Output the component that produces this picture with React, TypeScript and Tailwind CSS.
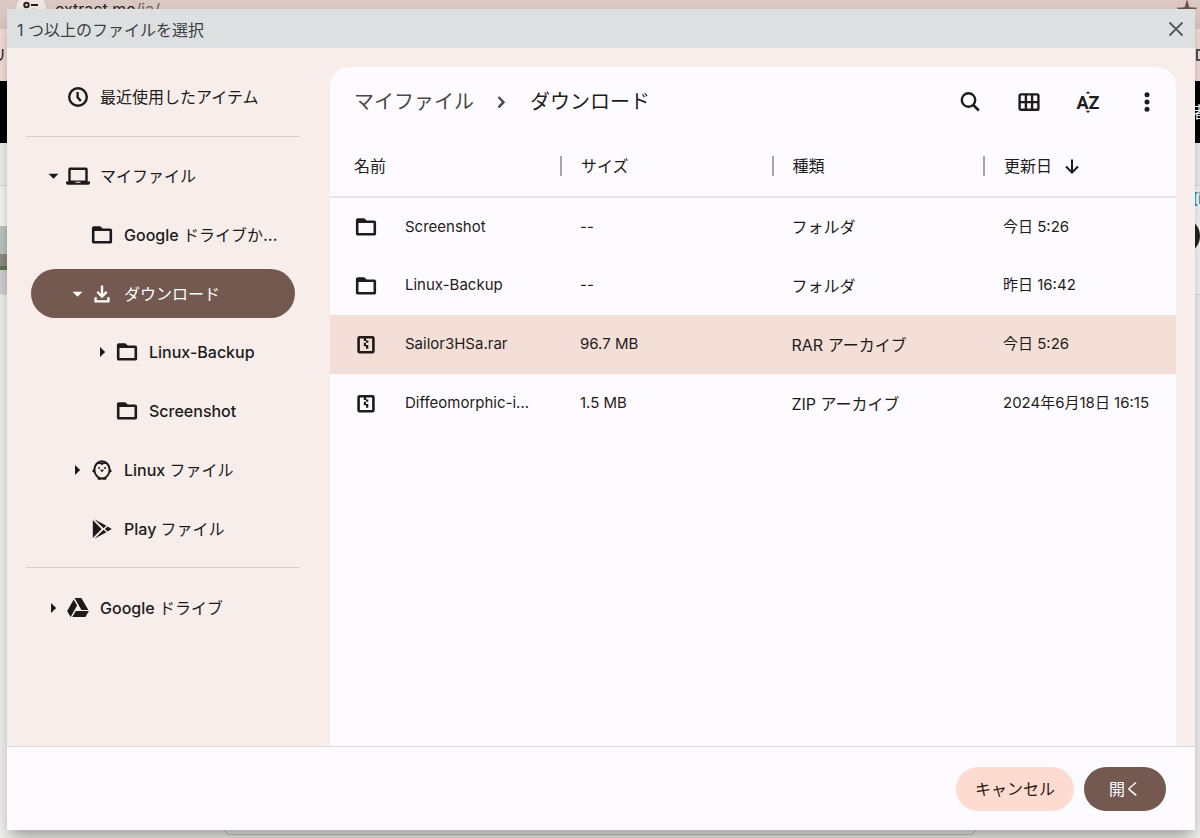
import { useState } from 'react';
import type { ReactNode } from 'react';
import clsx from 'clsx';

type IconProps = { className?: string };

function FolderIcon({ className }: IconProps) {
  return (
    <svg viewBox="0 0 24 24" className={clsx('size-6 shrink-0', className)} fill="currentColor" aria-hidden="true">
      <path
        fillRule="evenodd"
        d="M10.2 3.2H3.800c-1.100 0-1.900.8-1.900 1.900v13.600c0 1.100.8 1.900 1.900 1.900h16.400c1.100 0 1.900-.8 1.900-1.900V7.300c0-1.100-.8-1.900-1.900-1.900h-7.400zM4.500 8h15v10.100h-15z"
      />
    </svg>
  );
}

function ClockIcon() {
  return (
    <svg viewBox="0 0 24 24" className="size-6 shrink-0" fill="none" stroke="currentColor" strokeWidth="2.4" aria-hidden="true">
      <circle cx="12" cy="12" r="8.8" />
      <path d="M11.600 7v5.200l3.200 3.900" />
    </svg>
  );
}

function LaptopIcon() {
  return (
    <svg viewBox="0 0 24 24" className="size-6 shrink-0" fill="currentColor" aria-hidden="true">
      <path
        fillRule="evenodd"
        d="M4 3.600h16a1.700 1.700 0 0 1 1.700 1.700v12.200H24v1.500a1.700 1.700 0 0 1-1.700 1.700H1.700A1.700 1.700 0 0 1 0 19v-1.500h2.300V5.300A1.700 1.700 0 0 1 4 3.600zM4.700 6v10.500h14.600V6zM9.500 17.800v1h5v-1z"
      />
    </svg>
  );
}

function DownloadIcon() {
  return (
    <svg viewBox="0 0 24 24" className="size-6 shrink-0" fill="none" stroke="currentColor" strokeWidth="2.400" aria-hidden="true">
      <path d="M12 3.500v10.500M7.300 9.800l4.700 4.700 4.700-4.700" />
      <path d="M5.600 15.200v4.200h12.800v-4.200" strokeLinejoin="round" />
    </svg>
  );
}

function PenguinIcon() {
  return (
    <svg viewBox="0 0 24 24" className="size-6 shrink-0" aria-hidden="true">
      <path d="M4.800 9.500 2 13.300l2.200 1.500zM19.200 9.500l2.800 3.800-2.200 1.500z" fill="currentColor" />
      <ellipse cx="12" cy="11.800" rx="7.600" ry="8.600" fill="none" stroke="currentColor" strokeWidth="2" />
      <path d="M6.500 6.500C8 3.500 16 3.500 17.500 6.500 15 5.800 13 6 12 7.300c-1-1.300-3-1.500-5.500-.8z" fill="currentColor" />
      <circle cx="9" cy="10" r="1" fill="currentColor" />
      <circle cx="15" cy="10" r="1" fill="currentColor" />
      <path d="M9.800 11.800h4.400L12 14.300z" fill="currentColor" />
      <path d="M7.500 20h3.800v1.800H7.800zM12.700 20h3.800l-.3 1.800h-3.500z" fill="currentColor" />
    </svg>
  );
}

function PlayStoreIcon() {
  return (
    <svg viewBox="0 0 24 24" className="size-6 shrink-0" fill="currentColor" aria-hidden="true">
      <path d="M2.800 3v18L11.600 12z" />
      <path d="M4.400 2.200 16.400 8.800l-2.800 2.500zM4.400 21.800l12-6.600-2.800-2.500z" />
      <path d="M17.600 9.400 21.800 12l-4.200 2.600L14.900 12z" />
    </svg>
  );
}

function DriveIcon() {
  return (
    <svg viewBox="0 0 24 24" className="size-6 shrink-0" fill="currentColor" aria-hidden="true">
      <path d="M7.710 3.500 1.150 15l3.430 6 6.550-11.500zM9.730 15 6.300 21h13.120l3.430-6zM22.280 14 15.420 2H8.580l6.850 12z" />
    </svg>
  );
}

function ArchiveIcon() {
  return (
    <svg viewBox="0 0 24 24" className="size-6 shrink-0" fill="currentColor" aria-hidden="true">
      <rect x="4.600" y="4.300" width="14.800" height="15" rx="1" fill="none" stroke="currentColor" strokeWidth="2.600" />
      <path d="M9.800 5h2.400v3H9.800zM12 7.600h2.300v2.200H12zM9.800 9.800H12V12H9.800zM12 12h2.300v2.200H12zM9.800 12H12v1.200H9.800zM12 14.200h2.300v1.600H12z" />
    </svg>
  );
}

function SearchIcon() {
  return (
    <svg viewBox="0 0 24 24" className="size-6" fill="none" stroke="currentColor" strokeWidth="2.400" aria-hidden="true">
      <circle cx="10.500" cy="10" r="6.700" />
      <path d="m15.200 14.900 5.600 5.600" strokeWidth="2.700" />
    </svg>
  );
}

function GridIcon() {
  return (
    <svg viewBox="0 0 24 24" className="size-6" fill="none" stroke="currentColor" strokeWidth="2.400" aria-hidden="true">
      <rect x="2.600" y="4.400" width="18.800" height="15.400" rx="1.400" />
      <path d="M8.900 4.600v15M15.100 4.600v15M2.600 12.100h18.800" />
    </svg>
  );
}

function SortIcon() {
  return (
    <svg viewBox="0 0 24 24" className="size-6" fill="currentColor" aria-hidden="true">
      <text x="12" y="18.500" textAnchor="middle" fontFamily="Roboto, sans-serif" fontSize="18" fontWeight="700">
        AZ
      </text>
      <path d="m12 1.200 2.300 2.300H9.700zM12 23l2.300-2.300H9.700z" />
    </svg>
  );
}

function MoreIcon() {
  return (
    <svg viewBox="0 0 24 24" className="size-6" fill="currentColor" aria-hidden="true">
      <circle cx="12" cy="4.700" r="2.500" />
      <circle cx="12" cy="12" r="2.500" />
      <circle cx="12" cy="19.300" r="2.500" />
    </svg>
  );
}

function Caret({ open }: { open: boolean }) {
  return (
    <svg viewBox="0 0 24 24" className="size-6 shrink-0" fill="currentColor" aria-hidden="true">
      {open ? <path d="M6.500 9.700h10l-5 5z" /> : <path d="M9 7v10l5.200-5z" />}
    </svg>
  );
}

type TreeItemProps = {
  label: string;
  icon: ReactNode;
  indent?: string;
  expanded?: boolean;
  selected?: boolean;
  onSelect: (label: string) => void;
};

function TreeItem({ label, icon, indent = 'pl-[11px]', expanded, selected, onSelect }: TreeItemProps) {
  // Latin words are set in medium weight, kana and kanji in regular
  const parts = label.split(/([\x20-\x7e]+)/).filter(Boolean);

  return (
    <button
      type="button"
      aria-expanded={expanded}
      aria-current={selected ? 'true' : undefined}
      onClick={() => onSelect(label)}
      className={clsx(
        'flex h-[49px] w-full items-center rounded-full whitespace-nowrap',
        indent,
        selected ? 'bg-[#735950] text-white' : 'text-[#1d1b1a]'
      )}
    >
      {expanded === undefined ? <span className="size-6 shrink-0" /> : <Caret open={expanded} />}
      {icon}
      <span className="ml-2.5">
        {parts.map(part => (
          <span key={part} className={/^[\x20-\x7e]/.test(part) ? 'font-medium' : 'font-normal'}>
            {part}
          </span>
        ))}
      </span>
    </button>
  );
}

const files = [
  { name: 'Screenshot', size: '--', type: 'フォルダ', date: '今日 5:26', folder: true },
  { name: 'Linux-Backup', size: '--', type: 'フォルダ', date: '昨日 16:42', folder: true },
  { name: 'Sailor3HSa.rar', size: '96.7 MB', type: 'RAR アーカイブ', date: '今日 5:26', folder: false },
  { name: 'Diffeomorphic-i...', size: '1.5 MB', type: 'ZIP アーカイブ', date: '2024年6月18日 16:15', folder: false },
];

const tools = [
  { label: '検索', icon: <SearchIcon /> },
  { label: 'サムネイル表示に切り替え', icon: <GridIcon /> },
  { label: '並べ替えオプション', icon: <SortIcon /> },
  { label: 'その他', icon: <MoreIcon /> },
];

// The browser page that stays visible around the dialog
function PageBehind() {
  return (
    <div className="flex min-h-screen flex-col bg-[#f1f1f0]" aria-hidden="true">
      <div className="flex h-[29px] items-start justify-between bg-[#dcc8c2]">
        <div className="flex h-[18px] items-center">
          <span className="ml-4 flex h-[30px] w-[30px] items-start justify-center rounded-full bg-[#f3e6e2] pt-1.5">
            <svg viewBox="0 0 18 18" className="size-[18px]" fill="none" stroke="#222" strokeWidth="2">
              <circle cx="4.500" cy="5" r="2.200" />
              <path d="M9 5h7M2 12h6" />
              <circle cx="12" cy="12" r="2.200" />
            </svg>
          </span>
          <span className="ml-[9px] text-[#222]">
            extract.me<span className="text-[#6b5f5c]">/ja/</span>
          </span>
        </div>
        <svg viewBox="0 0 24 24" className="mr-[1px] size-6" fill="#6b524a">
          <path d="m12-1 2.300 8.200 8.200.5-6.500 5 2.300 8-6.300-4.500-6.300 4.500 2.300-8-6.500-5 8.200-.5z" />
        </svg>
      </div>
      <div className="flex h-[52px] items-center justify-between bg-[#f6e0d9]">
        <span className="-ml-[9px] text-[#222]">リ</span>
        <span className="-mr-2 h-3 w-3 border-2 border-[#555]" />
      </div>
      <div className="flex h-[62px] items-center justify-end bg-black">
        <span className="-mr-2 text-white">者</span>
      </div>
      <div className="flex h-[43px] items-end border-b border-[#dcdcdc] bg-[#f1f1ef]" />
      <div className="flex h-[109px] items-end justify-between border-b border-[#dcdcdc] bg-[#f8f8f7]">
        <div className="flex h-[68px] w-2 flex-col">
          <div className="h-7 bg-[#bcc5c3]" />
          <div className="h-3 bg-[#8f8a88]" />
          <div className="h-1 bg-[#5c7a4a]" />
          <div className="flex-1 bg-[#d3d1ce]" />
        </div>
        <div className="flex h-full w-2 flex-col">
          <span className="font-bold text-[#1f9fb3]">[i]</span>
          <span className="-ml-7 mt-2 size-9 shrink-0 rounded-full bg-[#222]" />
        </div>
      </div>
      <div className="mx-[223px] mb-[3px] flex-1 rounded-lg border border-[#c4c4c4]" />
    </div>
  );
}

export default function App() {
  const [current, setCurrent] = useState('ダウンロード');
  const [selectedFile, setSelectedFile] = useState('Sailor3HSa.rar');

  const item = (label: string, icon: ReactNode, indent?: string, expanded?: boolean) => (
    <TreeItem
      label={label}
      icon={icon}
      indent={indent}
      expanded={expanded}
      selected={current === label}
      onSelect={setCurrent}
    />
  );

  return (
    <div className='relative h-screen overflow-hidden font-[Inter,"Noto_Sans_CJK_JP",sans-serif] text-base'>
      <PageBehind />

      <div className="absolute inset-0 flex pt-[9px] pr-[5px] pb-2 pl-[7px]">
        <div
          role="dialog"
          aria-labelledby="dialog-title"
          className="flex flex-1 flex-col bg-[#fdfbff] shadow-[0_10px_16px_-3px_rgba(0,0,0,0.35)]"
        >
          <header className="flex h-[39px] shrink-0 items-center justify-between bg-[#dde0e1] px-2.5 text-[#3c4043]">
            <h1 id="dialog-title" className="mt-0.5">1 つ以上のファイルを選択</h1>
            <button type="button" aria-label="閉じる">
              <svg viewBox="0 0 18 18" className="size-[18px]" fill="none" stroke="#55585b" strokeWidth="1.800">
                <path d="m2.500 2.500 13 13M15.500 2.500l-13 13" />
              </svg>
            </button>
          </header>

          <div className="flex min-h-0 flex-1 bg-[#f7eeec]">
            <nav className="w-[323px] shrink-0 pt-6 pr-[35px] pl-6">
              {item('最近使用したアイテム', <ClockIcon />)}
              <hr className="-mx-[5px] mt-[15px] mb-[14px] border-[#d8cdca]" />
              <ul className="flex flex-col gap-[10px]">
                <li>{item('マイファイル', <LaptopIcon />, 'pl-[11px]', true)}</li>
                <li>{item('Google ドライブか...', <FolderIcon />, 'pl-[35px]')}</li>
                <li>
                  {item('ダウンロード', <DownloadIcon />, 'pl-[35px]', true)}
                  <ul className="mt-[9px] flex flex-col gap-[10px]">
                    <li>{item('Linux-Backup', <FolderIcon />, 'pl-[60px]', false)}</li>
                    <li>{item('Screenshot', <FolderIcon />, 'pl-[60px]')}</li>
                  </ul>
                </li>
                <li>{item('Linux ファイル', <PenguinIcon />, 'pl-[35px]', false)}</li>
                <li>{item('Play ファイル', <PlayStoreIcon />, 'pl-[35px]')}</li>
              </ul>
              <hr className="-mx-[5px] mt-[14px] mb-[15px] border-[#d8cdca]" />
              {item('Google ドライブ', <DriveIcon />, 'pl-[11px]', false)}
            </nav>

            <main className="mt-[19px] mr-[19px] min-w-0 flex-1 overflow-hidden rounded-t-[20px] bg-[#fdfbff] text-[#1f1c1b]">
              <div className="flex h-[69px] items-center justify-between pl-6">
                <div className="flex items-center text-xl">
                  <button type="button" className="text-[#4d4745]">マイファイル</button>
                  <svg viewBox="0 0 24 24" className="mx-4 size-6" fill="none" stroke="#4d4745" strokeWidth="2.400">
                    <path d="m8.500 7 5 5.200-5 5.200" />
                  </svg>
                  <button type="button">ダウンロード</button>
                </div>
                <div className="flex">
                  {tools.map(tool => (
                    <button key={tool.label} type="button" aria-label={tool.label} className="flex h-12 w-[59px] items-center justify-center">
                      {tool.icon}
                    </button>
                  ))}
                </div>
              </div>

              <table className="w-full table-fixed border-collapse text-left">
                <thead>
                  <tr className="h-[61px] border-b-2 border-[#e9e5e8]">
                    <th className="w-[230px] pl-6 font-normal">名前</th>
                    <th className="w-1/4 font-normal">
                      <span className="flex h-5 items-center border-l-2 border-[#a9a5a6] pl-[19px]">サイズ</span>
                    </th>
                    <th className="w-1/4 font-normal">
                      <span className="flex h-5 items-center border-l-2 border-[#a9a5a6] pl-[19px]">種類</span>
                    </th>
                    <th className="font-normal" aria-sort="descending">
                      <span className="flex h-5 items-center border-l-2 border-[#a9a5a6] pl-[19px]">
                        更新日
                        <svg viewBox="0 0 20 20" className="ml-2.5 size-5" fill="none" stroke="currentColor" strokeWidth="2">
                          <path d="M10 3.500v13M4 10.500l6 6 6-6" />
                        </svg>
                      </span>
                    </th>
                  </tr>
                </thead>
                <tbody>
                  {files.map(file => (
                    <tr
                      key={file.name}
                      aria-selected={file.name === selectedFile}
                      onClick={() => setSelectedFile(file.name)}
                      className={clsx('h-[59px] whitespace-nowrap', file.name === selectedFile && 'bg-[#f3ded8]')}
                    >
                      <td className="pl-6">
                        <span className="flex items-center gap-[27px] text-[15px]">
                          {file.folder ? <FolderIcon /> : <ArchiveIcon />}
                          {file.name}
                        </span>
                      </td>
                      <td className="pl-5 text-[15px]">{file.size}</td>
                      <td className="pl-5">{file.type}</td>
                      <td className="pl-5 text-[15px]">{file.date}</td>
                    </tr>
                  ))}
                </tbody>
              </table>
            </main>
          </div>

          <footer className="flex h-[84px] shrink-0 items-center justify-end gap-2.5 border-t border-[#e0d9da] pr-[29px]">
            <button type="button" className="h-11 w-[118px] rounded-full bg-[#fddbd1] text-[#2b1610]">キャンセル</button>
            <button type="button" className="h-11 w-[82px] rounded-full bg-[#735950] text-white">開く</button>
          </footer>
        </div>
      </div>
    </div>
  );
}
